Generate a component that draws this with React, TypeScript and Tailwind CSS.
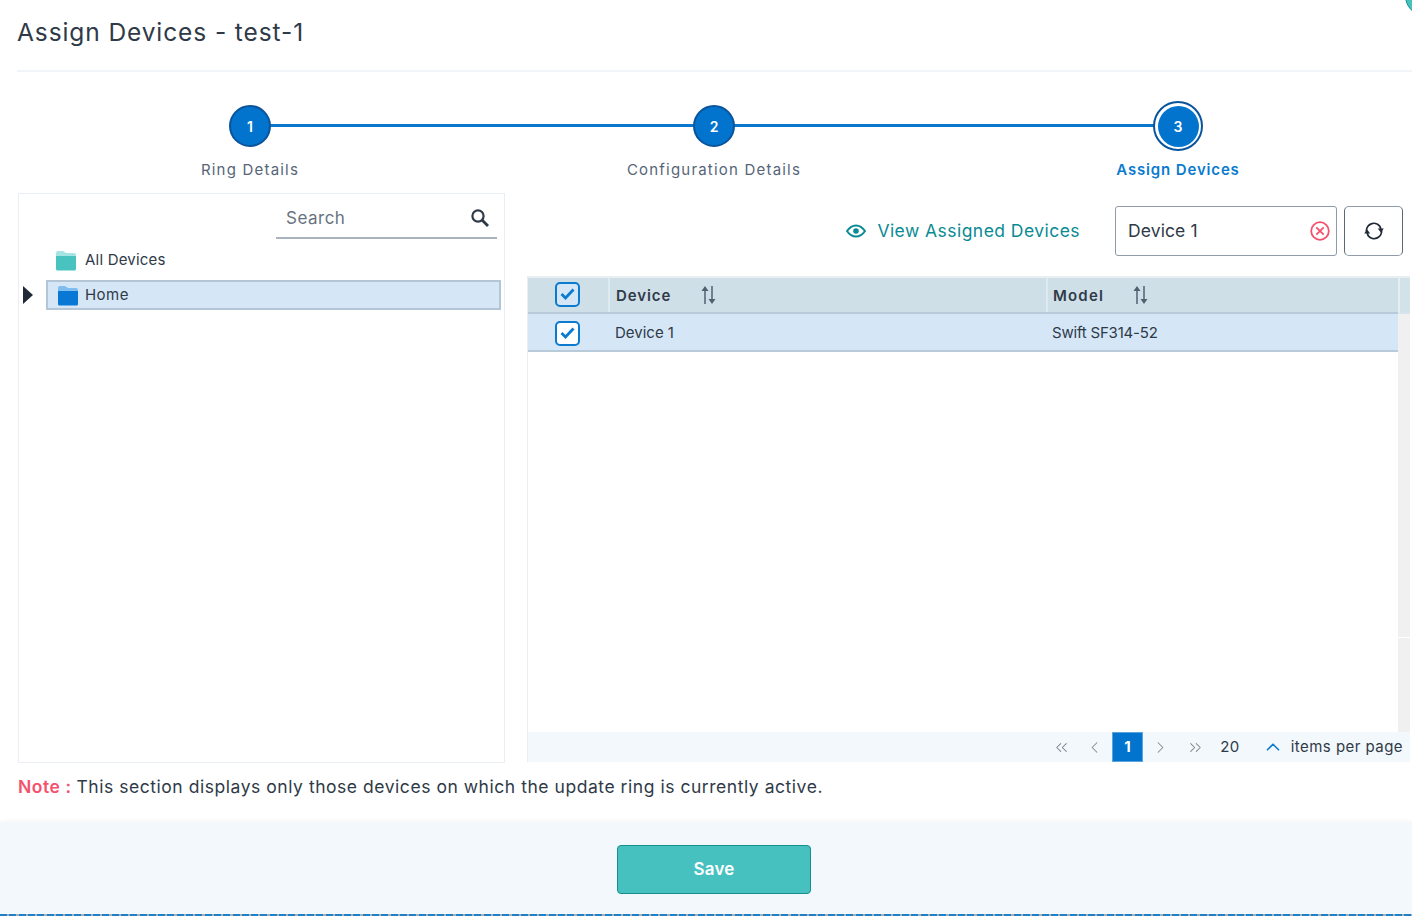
import React from "react";
import { ChevronLeft, ChevronRight, ChevronsLeft, ChevronsRight, ChevronUp } from "lucide-react";

const steps = [
  { n: 1, label: "Ring Details" },
  { n: 2, label: "Configuration Details" },
  { n: 3, label: "Assign Devices", active: true },
];

function FolderIcon({ tab, body }: { tab: string; body: string }) {
  return (
    <svg width="22" height="21" viewBox="0 0 22 21" className="shrink-0">
      <path d="M1 5V3a2 2 0 0 1 2-2h5l3 2h8a2 2 0 0 1 2 2v2H1z" fill={tab} />
      <path d="M1 6h20v13a1.500 1.500 0 0 1-1.500 1.500h-17A1.500 1.500 0 0 1 1 19z" fill={body} />
    </svg>
  );
}

function Check({ white }: { white?: boolean }) {
  return (
    <span className={`flex h-[25px] w-[25px] items-center justify-center rounded-[5px] border-[2.500px] border-[#0b7bd0] ${white ? "bg-white" : "bg-[#d5e7f7]"}`}>
      <svg width="15" height="12" viewBox="0 0 15 12" fill="none">
        <path d="M1.500 6 5.500 10 13.500 1.500" stroke="#0b7bd0" strokeWidth="2.800" />
      </svg>
    </span>
  );
}

function SortIcon() {
  return (
    <svg width="16" height="20" viewBox="0 0 16 20" className="-ml-px text-[#4f6070]">
      <path d="M5 19V4" stroke="currentColor" strokeWidth="1.500" />
      <path d="M1.500 6 5 1l3.500 5z" fill="currentColor" />
      <path d="M12 1v15" stroke="currentColor" strokeWidth="1.500" />
      <path d="M8.500 14 12 19l3.500-5z" fill="currentColor" />
    </svg>
  );
}

function SearchGlyph() {
  return (
    <svg width="20" height="20" viewBox="0 0 20 20" fill="none" stroke="#2f3a48">
      <circle cx="8" cy="8" r="5.600" strokeWidth="2.200" />
      <path d="M12 12l6 6" strokeWidth="2.800" />
    </svg>
  );
}

function EyeGlyph() {
  return (
    <svg width="20" height="14" viewBox="0 0 20 14" fill="none">
      <path d="M1 7c2.500-3.800 5.500-5.600 9-5.600S16.500 3.200 19 7c-2.500 3.800-5.500 5.600-9 5.600S3.500 10.800 1 7z" stroke="#0a8b94" strokeWidth="2" />
      <circle cx="10" cy="7" r="2.800" fill="#0a8b94" />
    </svg>
  );
}

function SyncGlyph() {
  return (
    <svg width="20" height="20" viewBox="0 0 20 20" fill="none">
      <path d="M2.600 11.500A7.500 7.500 0 0 1 15.800 5.200L16.800 8" stroke="#1f2937" strokeWidth="1.800" />
      <path d="M17.400 8.500A7.500 7.500 0 0 1 4.200 14.800L3.200 12" stroke="#1f2937" strokeWidth="1.800" />
      <path d="M13.800 7.600H19.800L16.800 11.400z" fill="#1f2937" />
      <path d="M6.200 12.400H0.200L3.200 8.600z" fill="#1f2937" />
    </svg>
  );
}

export default function App() {
  return (
    <div className="relative h-[916px] w-[1412px] overflow-hidden bg-white font-['Inter',sans-serif] text-[#2f3a48]">
      {/* corner avatar peeking in */}
      <div className="absolute -right-[33px] -top-[24px] h-[40px] w-[40px] rounded-full border border-[#14908f] bg-[#46c1bf]" />

      <div className="ml-[17px] flex h-[72px] items-center border-b-2 border-[#f1f5f9] pb-[6px]">
        <h1 className="text-[24.500px] font-normal tracking-[0.9px] text-[#2f3a48]">Assign Devices - test-1</h1>
      </div>

      {/* stepper */}
      <div className="ml-[18px] mt-[29px] grid h-[92px] w-[1392px] grid-cols-3">
        {steps.map((s) => (
          <div key={s.n} className="relative flex flex-col items-center">
            {s.n < 3 && <div className="absolute left-1/2 top-[23px] h-[3px] w-full bg-[#0b76cd]" />}
            <div className="relative flex h-[50px] items-center justify-center">
              {s.active ? (
                <div className="flex h-[50px] w-[50px] items-center justify-center rounded-full border-2 border-[#0a549c] bg-white">
                  <span className="flex h-[41px] w-[41px] items-center justify-center rounded-full bg-[#0274cd] text-[14px] font-semibold text-white">3</span>
                </div>
              ) : (
                <span className="flex h-[42px] w-[42px] items-center justify-center rounded-full border-2 border-[#0a549c] bg-[#0274cd] text-[14px] font-semibold text-white">{s.n}</span>
              )}
            </div>
            <span className={`mt-[8px] text-[15px] ${s.active ? "font-semibold tracking-[0.85px] text-[#0b7bd0]" : "tracking-[1.2px] text-[#566578]"}`}>{s.label}</span>
          </div>
        ))}
      </div>

      <div className="ml-[18px] flex h-[570px] gap-[22px]">
        {/* device tree */}
        <div className="flex w-[487px] flex-col border border-[#e8eef3] pr-[3px]">
          <div className="ml-auto mr-[4px] flex h-[45px] w-[221px] items-center justify-between border-b-2 border-[#aab4bf] pl-[10px] pr-[7px] pt-[5px]">
            <span className="pt-[2px] text-[17px] tracking-[0.5px] text-[#68737f]">Search</span>
            <SearchGlyph />
          </div>
          <div className="ml-[36px] mt-[8px] flex h-[26px] items-center gap-[8px] text-[15px] tracking-[0.2px]">
            <FolderIcon tab="#a6e4e3" body="#48c3bf" />
            <span>All Devices</span>
          </div>
          <div className="mt-[7px] flex items-center">
            <svg width="27" height="18" viewBox="0 0 27 18" className="shrink-0">
              <path d="M4 0l10 9-10 9z" fill="#1f2937" />
            </svg>
            <div className="flex h-[30px] flex-1 items-center gap-[6px] border-2 border-[#b4c6d6] bg-[#d5e7f7] pl-[9px] text-[15px] tracking-[0.45px]">
              <FolderIcon tab="#7dbdf0" body="#0878d4" />
              <span>Home</span>
            </div>
          </div>
        </div>

        {/* device table */}
        <div className="flex w-[883px] flex-col pb-px">
          <div className="flex h-[83px] items-start justify-end pr-[7px] pt-[13px]">
            <div className="mr-[35px] flex h-[50px] items-center gap-[11px] text-[#0a8b94]">
              <EyeGlyph />
              <span className="text-[17.500px] tracking-[0.45px]">View Assigned Devices</span>
            </div>
            <div className="flex h-[50px] w-[222px] items-center justify-between rounded-[3px] border border-[#8f9ba8] pl-[12px] pr-[6px]">
              <span className="text-[17.500px] tracking-[0.1px]">Device 1</span>
              <svg width="20" height="20" viewBox="0 0 20 20" fill="none" stroke="#f4516c" strokeWidth="1.800">
                <circle cx="10" cy="10" r="8.800" />
                <path d="M6.300 6.300l7.400 7.400M13.700 6.300l-7.400 7.400" />
              </svg>
            </div>
            <div className="ml-[7px] flex h-[50px] w-[59px] items-center justify-center rounded-[5px] border border-[#5c6875] border-y-[#8f9ba8]">
              <SyncGlyph />
            </div>
          </div>

          <div className="flex flex-1 flex-col border-l border-[#e8eef3]">
            <div className="flex flex-1">
              <div className="flex w-[870px] flex-col">
                <div className="flex h-[38px] border-y-2 border-t-[#e9eef2] border-b-[#b8cbda] bg-[#cfdfe8] font-semibold">
                  <div className="flex w-[82px] items-center justify-center border-r-2 border-[#deeaf1] pb-[2px] pr-[2px]">
                    <Check />
                  </div>
                  <div className="flex w-[438px] items-center border-r-2 border-[#deeaf1] pl-[6px] text-[15px] tracking-[0.9px]">
                    <span className="w-[85px] pt-[2px]">Device</span>
                    <SortIcon />
                  </div>
                  <div className="flex flex-1 items-center pl-[5px] text-[15px] tracking-[1.2px]">
                    <span className="w-[80px] pt-[2px]">Model</span>
                    <SortIcon />
                  </div>
                </div>
                <div className="flex h-[38px] items-center border-b-2 border-[#b8cbda] bg-[#d5e7f7] text-[15px]">
                  <div className="flex w-[82px] justify-center pr-[3px] pt-[2px]">
                    <Check white />
                  </div>
                  <span className="w-[438px] pl-[5px] pt-[2px] tracking-[0px]">Device 1</span>
                  <span className="pl-[4px] pt-[2px] tracking-[-0.2px]">Swift SF314-52</span>
                </div>
              </div>
              <div className="flex flex-1 flex-col">
                <div className="h-[38px] border-y-2 border-b-[#d5e3eb] border-t-[#e9eef2] border-l-2 border-l-[#e4eef3] bg-[#d3e1e9]" />
                <div className="flex-1 bg-[#f0f0f0]">
                  <div className="mt-[323px] h-px bg-white" />
                </div>
              </div>
            </div>

            {/* pagination */}
            <div className="flex h-[30px] items-center justify-end bg-[#f3f8fc] pr-[7px] text-[15px] tracking-[0.45px]">
              <ChevronsLeft size={19} strokeWidth={1.300} className="mr-[14px] text-[#7f878f]" />
              <ChevronLeft size={19} strokeWidth={1.300} className="mr-[8px] text-[#7f878f]" />
              <span className="flex h-[30px] w-[31px] items-center justify-center border border-[#5aa5de] bg-[#0274cd] font-bold text-white">1</span>
              <ChevronRight size={19} strokeWidth={1.300} className="ml-[8px] text-[#7f878f]" />
              <ChevronsRight size={19} strokeWidth={1.300} className="ml-[16px] text-[#7f878f]" />
              <span className="ml-[15px]">20</span>
              <ChevronUp size={22} strokeWidth={1.800} className="ml-[22px] text-[#0b7bd0]" />
              <span className="ml-[7px]">items per page</span>
            </div>
          </div>
        </div>
      </div>

      <p className="ml-[18px] mt-[14px] text-[17.500px] leading-[20px] tracking-[0.54px]">
        <span className="font-semibold text-[#f4516c]">Note : </span>
        This section displays only those devices on which the update ring is currently active.
      </p>

      {/* footer */}
      <div className="absolute inset-x-0 bottom-0 flex h-[94px] flex-col bg-[#f3f8fc] shadow-[0_-2px_4px_rgba(0,0,0,0.03)]">
        <div className="flex flex-1 justify-center pl-[16px] pt-[23px]">
          <button className="h-[49px] w-[194px] rounded-[4px] border border-[#14908f] bg-[#46c1bf] text-[17px] font-semibold tracking-[0.2px] text-white">Save</button>
        </div>
        <div className="h-[2px] bg-[repeating-linear-gradient(90deg,#1f80c8_0_7px,#a9b2b8_7px_9.300px)]" />
      </div>
    </div>
  );
}
